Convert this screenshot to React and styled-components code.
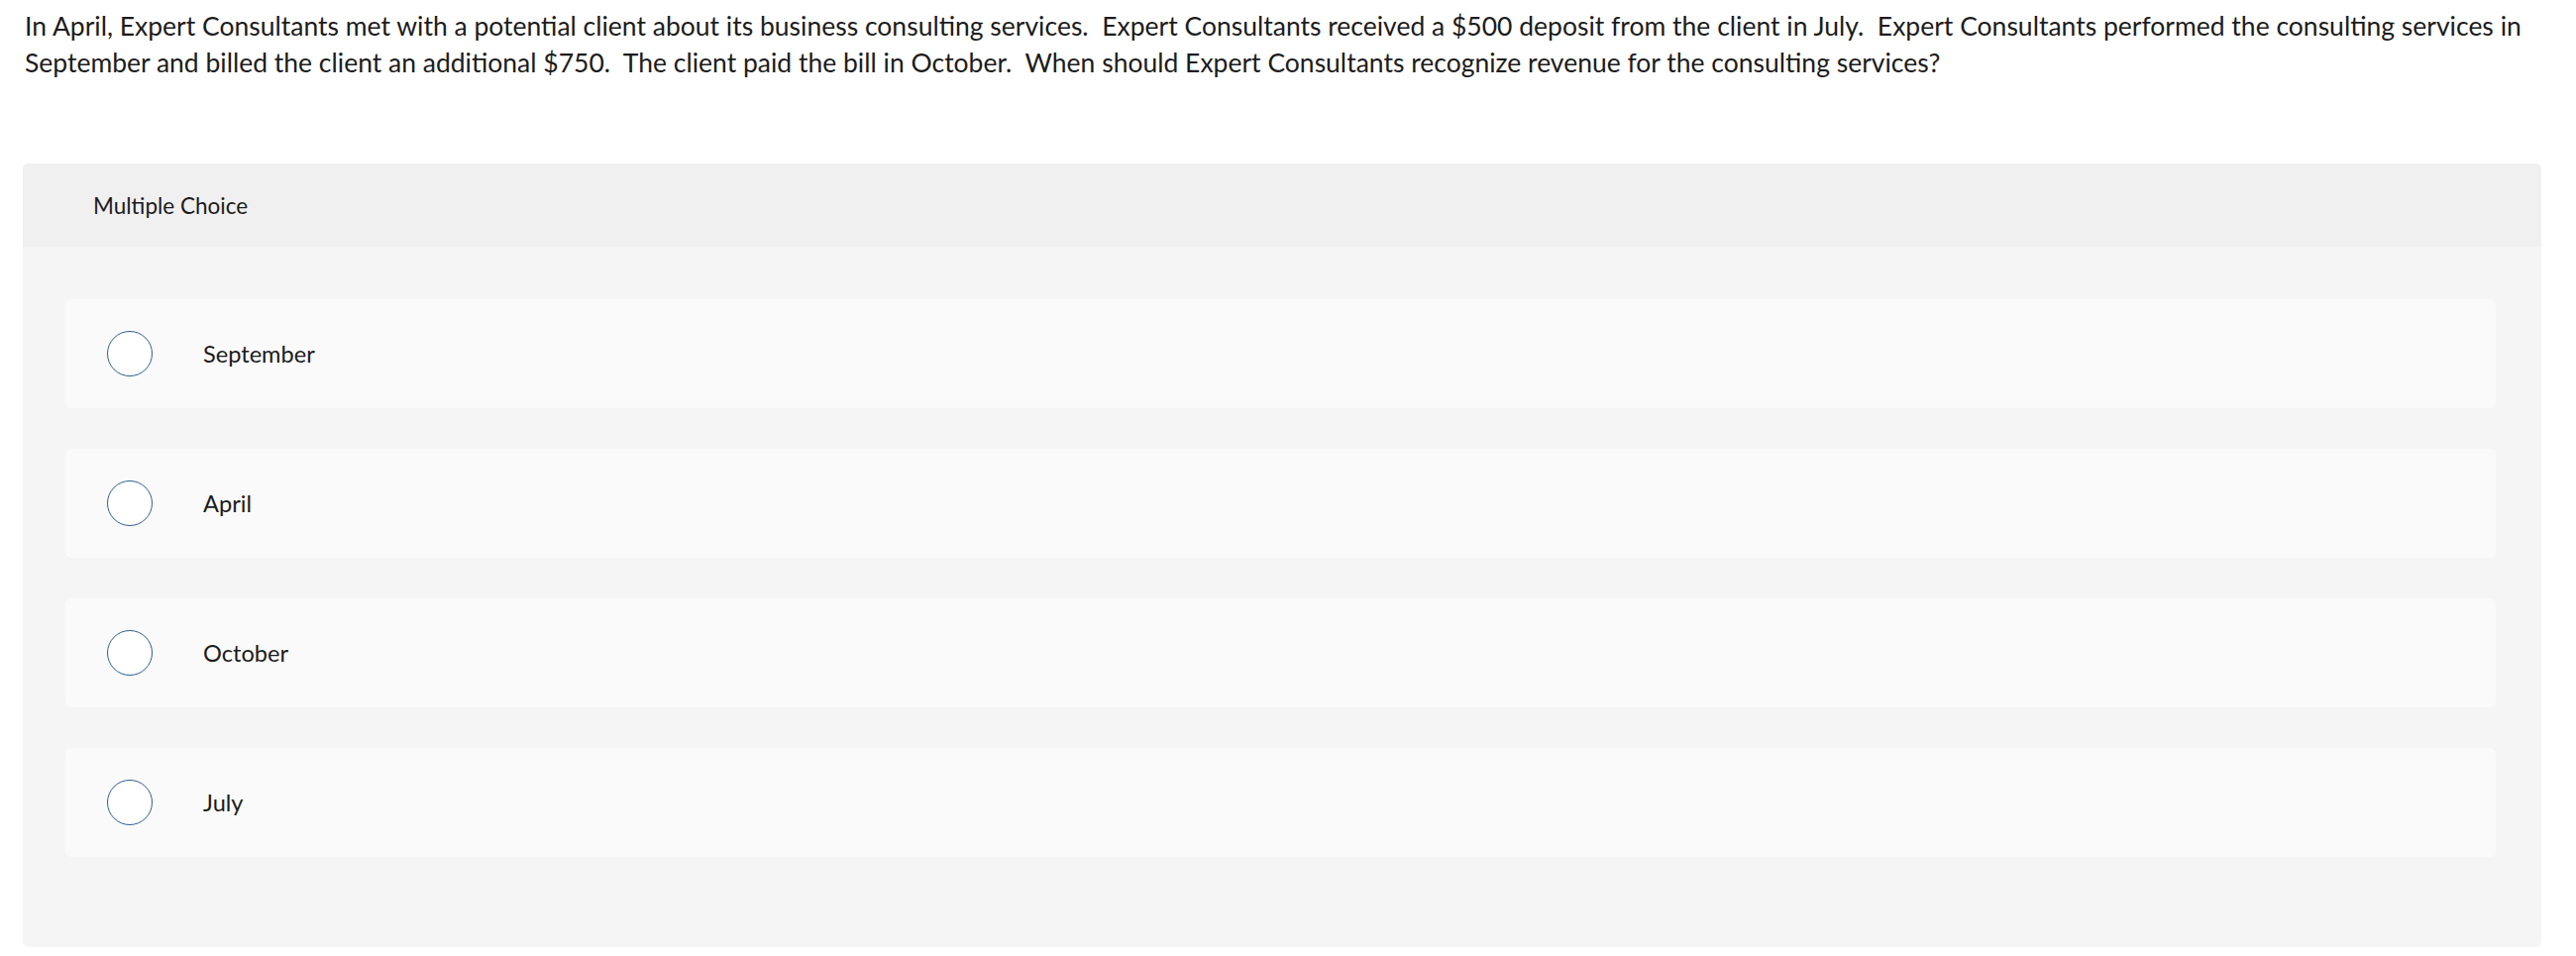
import React from "react";
import styled, { createGlobalStyle } from "styled-components";

const GlobalStyle = createGlobalStyle`
  html, body {
    margin: 0;
    padding: 0;
    background: #fff;
  }
  body {
    font-family: Lato, "Liberation Sans", sans-serif;
    color: #1c1c1c;
  }
`;

const QUESTION =
  "In April, Expert Consultants met with a potential client about its business consulting services.\u00a0 " +
  "Expert Consultants received a $500 deposit from the client in July.\u00a0 " +
  "Expert Consultants performed the consulting services in September and billed the client an additional $750.\u00a0 " +
  "The client paid the bill in October.\u00a0 " +
  "When should Expert Consultants recognize revenue for the consulting services?";

const OPTIONS = ["September", "April", "October", "July"];

const Page = styled.div`
  width: 2600px;
  padding: 8px 35px 0 23px;
  box-sizing: border-box;
`;

const Question = styled.p`
  margin: 0 0 83px 2px;
  font-size: 26.5px;
  line-height: 37px;
  color: #1c1c1c;
`;

const Panel = styled.div`
  background: #f5f5f5;
  border-radius: 6px;
  overflow: hidden;
  padding-bottom: 91px;
`;

const Header = styled.div`
  height: 84px;
  background: #f0f0f0;
  display: flex;
  align-items: center;
  padding-left: 71px;
  font-size: 22.5px;
  color: #1c1c1c;
`;

const Choices = styled.div`
  display: flex;
  flex-direction: column;
  gap: 41px;
  padding: 53px 46px 0 43px;
`;

const Choice = styled.label`
  height: 110px;
  background: #fafafa;
  border-radius: 6px;
  display: flex;
  align-items: center;
  padding-left: 42px;
  cursor: pointer;
`;

const Radio = styled.span`
  width: 46px;
  height: 46px;
  box-sizing: border-box;
  border-radius: 50%;
  border: 1.5px solid #2e5e8e;
  background: #fff;
  flex: none;
`;

const ChoiceText = styled.span`
  margin-left: 51px;
  font-size: 23.6px;
  color: #1c1c1c;
`;

export default function App() {
  return (
    <>
      <GlobalStyle />
      <Page>
        <Question>{QUESTION}</Question>
        <Panel>
          <Header>Multiple Choice</Header>
          <Choices>
            {OPTIONS.map((opt) => (
              <Choice key={opt}>
                <Radio />
                <ChoiceText>{opt}</ChoiceText>
              </Choice>
            ))}
          </Choices>
        </Panel>
      </Page>
    </>
  );
}
